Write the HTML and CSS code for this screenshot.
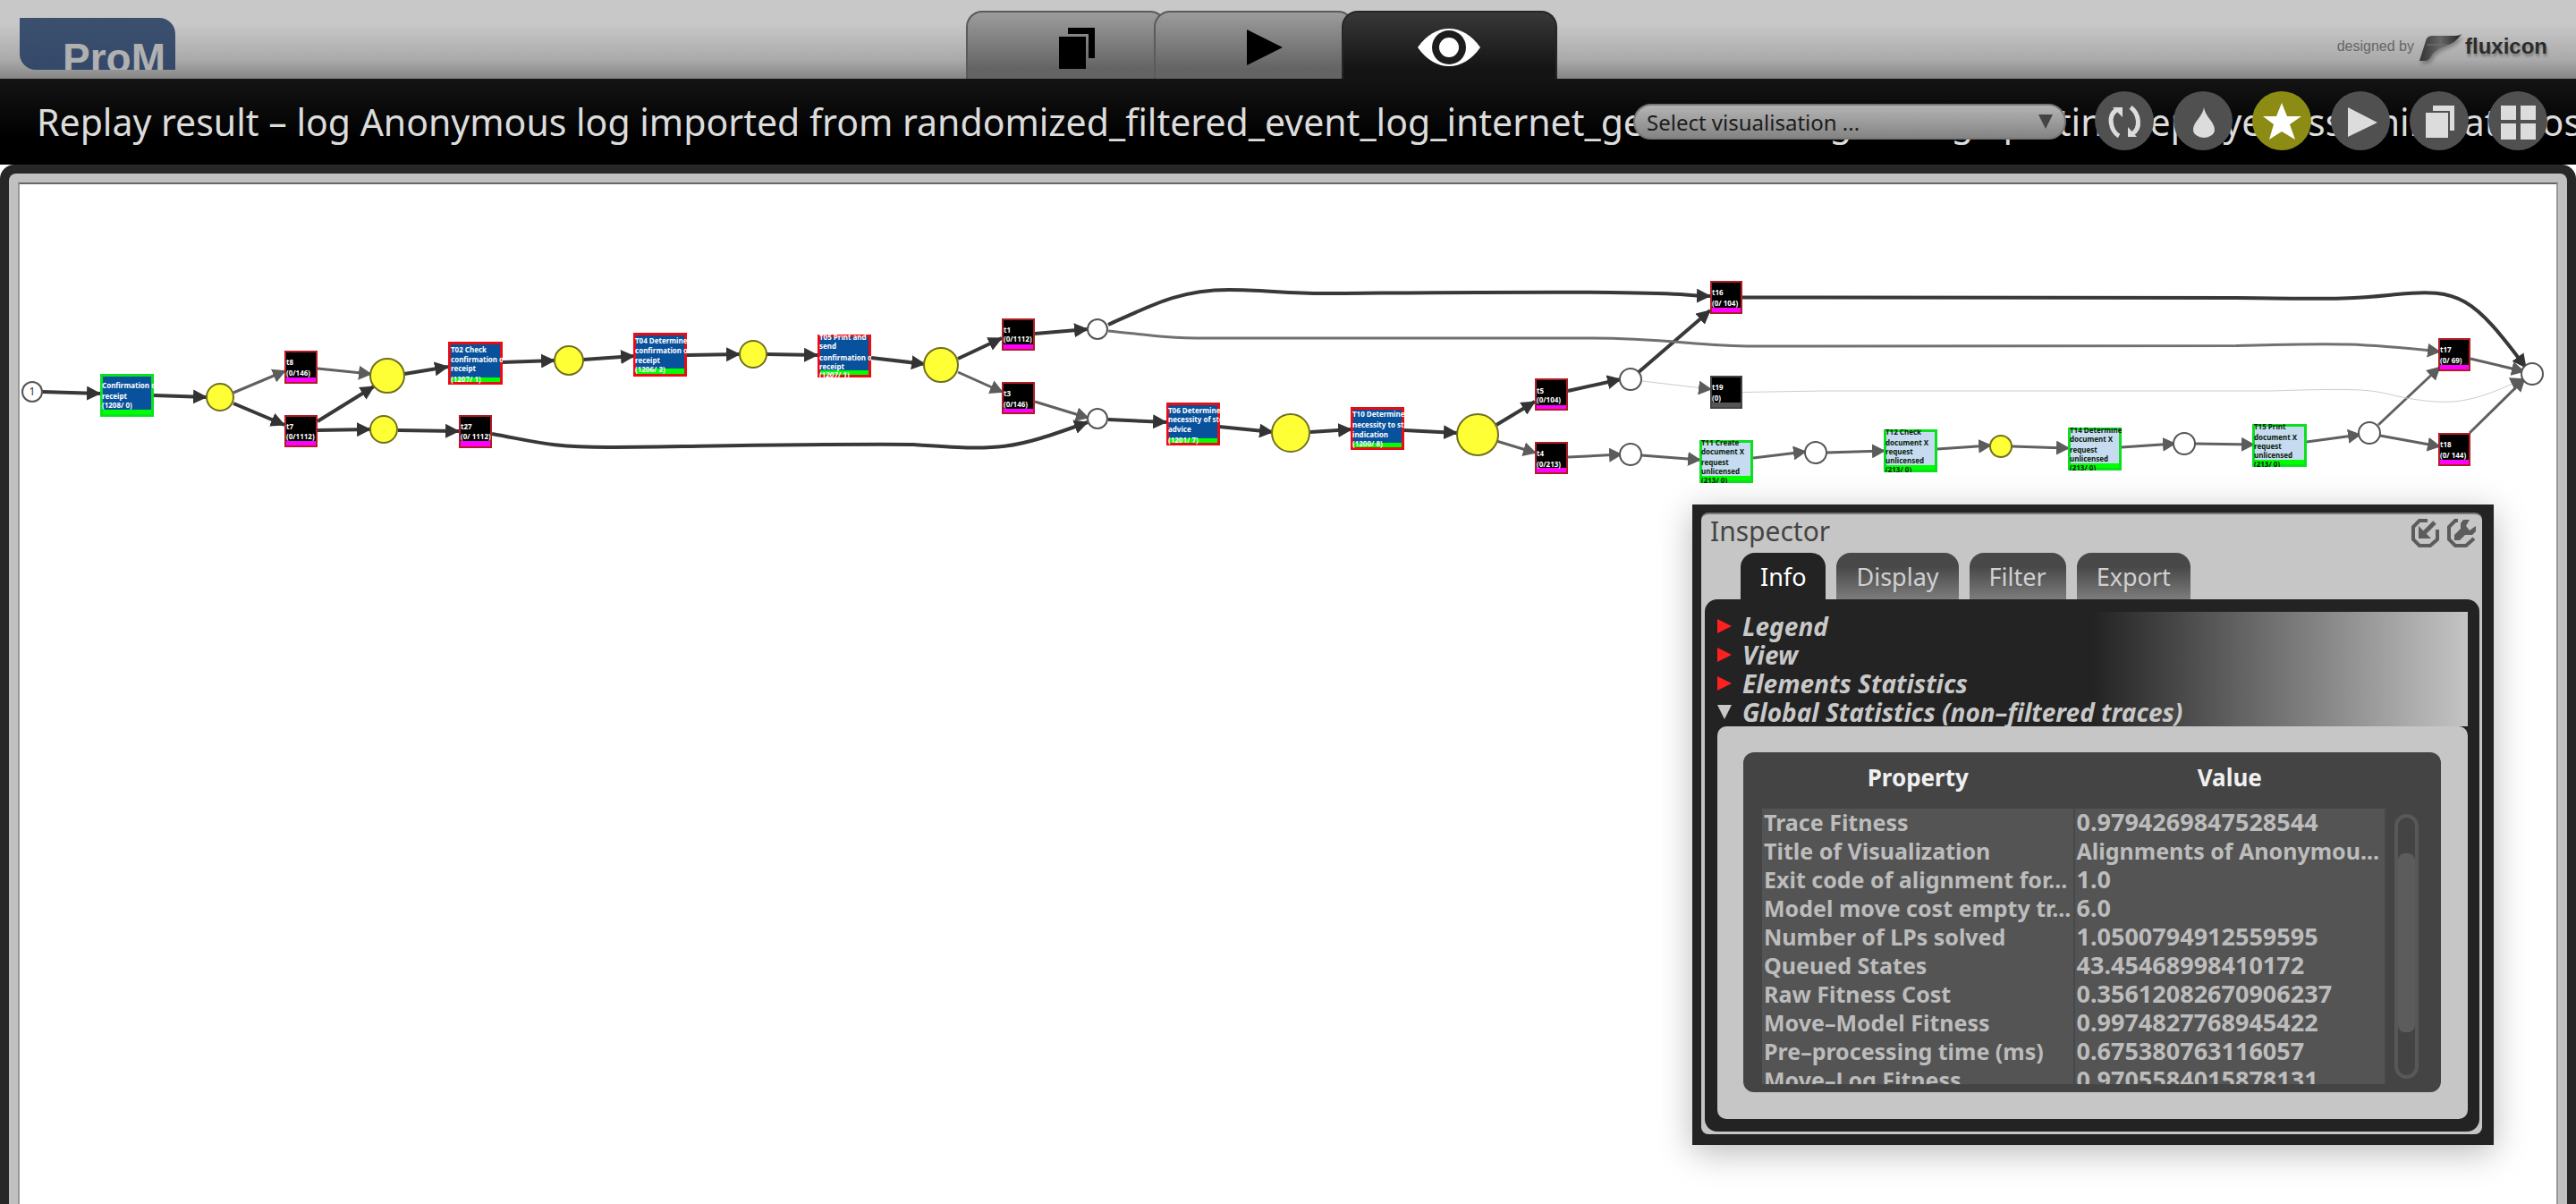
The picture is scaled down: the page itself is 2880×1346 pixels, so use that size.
FILE: index.html
```html
<!DOCTYPE html>
<html lang="en">
<head>
<meta charset="utf-8">
<title>ProM – Replay result</title>
<link rel="stylesheet" href="styles.css">
</head>
<body>
<header class="topbar">
  <div class="brand"><span>ProM</span></div>
  <nav class="main-tabs" aria-label="Views">
    <button class="main-tab" type="button" aria-label="Workspace">
      <svg width="40" height="48" viewBox="0 0 40 48"><path d="M10 2h30v34h-7V9H10z"/><path d="M0 12h30v36H0z"/></svg>
    </button>
    <button class="main-tab" type="button" aria-label="Actions">
      <svg width="40" height="40" viewBox="0 0 40 40"><path d="M0 0l40 20L0 40z"/></svg>
    </button>
    <button class="main-tab active" type="button" aria-label="Visualisation">
      <svg width="70" height="44" viewBox="0 0 70 44"><path fill="#fff" d="M0 22C10 8 22 1 35 1s25 7 35 21C60 36 48 43 35 43S10 36 0 22z"/><circle cx="35" cy="22" r="19" fill="#1c1c1c"/><circle cx="35" cy="22" r="11" fill="#fff"/></svg>
    </button>
  </nav>
  <div class="credit">
    <span class="credit-by">designed by</span>
    <svg width="47" height="32" viewBox="0 0 47 32"><defs><linearGradient id="wing" x1="0" x2="1"><stop offset="0" stop-color="#333"/><stop offset=".5" stop-color="#666"/><stop offset="1" stop-color="#222"/></linearGradient></defs><path fill="url(#wing)" d="M47 0c-5 7-9 10-15 12-8 3-14 6-18 11-2 4-4 7-8 7H0l7-22c1-4 3-6 8-6h22c4 0 7 0 10-2z"/><path d="M8 12h23" stroke="#777" stroke-width="1"/></svg>
    <strong>fluxicon</strong>
  </div>
</header>

<section class="titlebar">
  <h1>Replay result – log Anonymous log imported from randomized_filtered_event_log_internet_general1.xes.gz using Splitting replayer assuming at most 127 tokens in each place.</h1>
  <div class="tools">
    <label class="picker" aria-label="Select visualisation">
      <select><option>Select visualisation ...</option></select>
      <svg width="16" height="16" viewBox="0 0 16 16"><path fill="#444" d="M0 0h16L8 16z"/></svg>
    </label>
    <button class="tool" type="button" aria-label="Refresh"><svg viewBox="0 0 66 66"><g fill="none" stroke="#dcdcdc" stroke-width="5"><path d="M27 50c-9-5-14-24-1-30"/><path d="M40 18c9 6 13 24 1 30"/></g><path fill="#dcdcdc" d="M20 18h11v11zM37 51V40l10 11z"/></svg></button>
    <button class="tool" type="button" aria-label="Filter"><svg viewBox="0 0 66 66"><path fill="#dcdcdc" d="M34 18c1 10 12 16 12 25a12 9 0 0 1-24 0c0-9 11-15 12-25z"/></svg></button>
    <button class="tool starred" type="button" aria-label="Favourite"><svg viewBox="0 0 66 66"><path fill="#fff" d="M33 13l6 15h16L42 37l6 17-15-9-14 9 5-17-12-9h15z"/></svg></button>
    <button class="tool" type="button" aria-label="Run"><svg viewBox="0 0 66 66"><path fill="#dcdcdc" d="M19 18l33 17-33 16z"/></svg></button>
    <button class="tool" type="button" aria-label="Copy"><svg viewBox="0 0 66 66"><path fill="#dcdcdc" d="M26 16h24v28h-5V22H26z"/><path fill="#dcdcdc" d="M18 24h25v28H18z"/></svg></button>
    <button class="tool" type="button" aria-label="Grid"><svg viewBox="0 0 66 66"><path fill="#dcdcdc" d="M14 16h17v16H14zM36 16h17v16H36zM14 36h17v18H14zM36 36h17v18H36z"/></svg></button>
  </div>
</section>

<main class="workspace">
  <div class="mat">
    <div class="canvas">
      <svg class="net" viewBox="22 206 2836 1140" role="img" aria-label="Process model">
        <defs>
          <marker id="dark" markerUnits="userSpaceOnUse" markerWidth="16" markerHeight="16" refX="15" refY="8" orient="auto"><path d="M0 0l16 8-16 8z" fill="#333"/></marker>
          <marker id="grey" markerUnits="userSpaceOnUse" markerWidth="15" markerHeight="16" refX="13" refY="8" orient="auto"><path d="M0 0l15 8-15 8z" fill="#5c5c5c"/></marker>
        </defs>

        <g class="edge strong">
          <path d="M47 438L112 440"/><path d="M172 442L231 444"/><path d="M261 451L318 475"/>
          <path d="M355 471L418 432"/><path d="M355 481L414 480"/><path d="M445 481L513 482"/>
          <path d="M452 418L501 410"/><path d="M562 405L620 403"/><path d="M652 402L709 398"/>
          <path d="M768 397L827 396"/><path d="M857 396L914 397"/><path d="M974 400L1034 407"/>
          <path d="M1071 401L1120 378"/><path d="M1157 373L1216 368"/>
          <path d="M550 485C600 494 615 500 680 500S900 496 1021 497C1120 504 1130 503 1216 472"/>
          <path d="M1239 363C1290 340 1320 324 1374 324C1410 324 1440 328 1480 328S1700 326 1800 327S1870 330 1912 331"/>
          <path d="M1239 469L1304 472"/><path d="M1363 477L1423 483"/><path d="M1465 483L1511 480"/><path d="M1570 481L1629 484"/>
          <path d="M1673 475L1716 449"/><path d="M1753 437L1812 424"/><path d="M1832 416L1912 347"/>
          <path d="M1948 332.500L2500 333C2630 335 2640 333 2680 329C2750 322 2765 332 2824 411"/>
        </g>
        <g class="edge weak">
          <path d="M261 439L318 415"/><path d="M355 412L414 418"/><path d="M1071 416L1120 438"/><path d="M1157 449L1216 467"/>
          <path d="M1673 493L1716 506"/><path d="M1753 511L1812 508"/><path d="M1835 509L1900 514"/><path d="M1960 512L2018 505"/>
          <path d="M2042 506L2106 504"/><path d="M2166 502L2225 498"/><path d="M2249 499L2312 501"/><path d="M2372 500L2431 496"/>
          <path d="M2454 496L2519 497"/><path d="M2579 494L2638 486"/><path d="M2659 475L2727 411"/><path d="M2661 487L2727 499"/>
          <path d="M2762 401L2821 415"/><path d="M2761 484L2822 424"/>
        </g>
        <g class="edge thin">
          <path d="M1239 370C1280 374 1300 378 1350 378H1780C1860 378 1900 387 1960 387L2500 386.500C2620 383 2640 384 2727 393"/>
        </g>
        <g class="edge faint">
          <path d="M1836 426L1912 435"/>
          <path d="M1948 438.500L2040 437H2540C2660 433 2650 437 2690 445C2740 453 2760 452 2820 424"/>
        </g>

        <g class="place">
          <circle cx="36" cy="438" r="11"/><circle cx="1227" cy="368" r="11"/><circle cx="1227" cy="468" r="11"/>
          <circle cx="1823" cy="424" r="12"/><circle cx="1823" cy="508" r="12"/><circle cx="2030" cy="506" r="12"/>
          <circle cx="2442" cy="496" r="12"/><circle cx="2649" cy="484" r="12"/><circle cx="2831" cy="418" r="12"/>
        </g>
        <g class="place marked">
          <circle cx="246" cy="444" r="15"/><circle cx="433" cy="420" r="19"/><circle cx="429" cy="480" r="15"/>
          <circle cx="636" cy="403" r="16"/><circle cx="842" cy="396" r="15"/><circle cx="1052" cy="408" r="19"/>
          <circle cx="1443" cy="484" r="21"/><circle cx="1652" cy="486" r="23"/><circle cx="2237" cy="499" r="12"/>
        </g>
        <text class="token" x="36" y="442">1</text>

        <svg class="node sync" x="112" y="418" width="60" height="48"><rect class="face" width="100%" height="100%"/><rect class="bar" y="40" width="100%" height="8"/><rect class="frame" width="100%" height="100%"/><text><tspan x="2" y="16">Confirmation of</tspan><tspan x="2" y="28">receipt</tspan><tspan x="2" y="38">(1208/ 0)</tspan></text></svg>
        <svg class="node moved" x="501" y="382" width="61" height="48"><rect class="face" width="100%" height="100%"/><rect class="bar" y="40" width="100%" height="8"/><rect class="frame" width="100%" height="100%"/><text><tspan x="3" y="12">T02 Check</tspan><tspan x="3" y="23">confirmation of</tspan><tspan x="3" y="33">receipt</tspan><tspan x="3" y="45">(1207/ 1)</tspan></text></svg>
        <svg class="node moved" x="708" y="372" width="60" height="49"><rect class="face" width="100%" height="100%"/><rect class="bar" y="40" width="100%" height="9"/><rect class="frame" width="100%" height="100%"/><text><tspan x="2" y="12">T04 Determine</tspan><tspan x="2" y="23">confirmation of</tspan><tspan x="2" y="34">receipt</tspan><tspan x="2" y="44">(1206/ 2)</tspan></text></svg>
        <svg class="node moved" x="914" y="374" width="60" height="48"><rect class="face" width="100%" height="100%"/><rect class="bar" y="40" width="100%" height="8"/><rect class="frame" width="100%" height="100%"/><text><tspan x="2" y="6">T05 Print and</tspan><tspan x="2" y="16">send</tspan><tspan x="2" y="29">confirmation of</tspan><tspan x="2" y="39">receipt</tspan><tspan x="2" y="48">(1207/ 1)</tspan></text></svg>
        <svg class="node moved" x="1304" y="450" width="60" height="48"><rect class="face" width="100%" height="100%"/><rect class="bar" y="40" width="100%" height="8"/><rect class="frame" width="100%" height="100%"/><text><tspan x="2" y="12">T06 Determine</tspan><tspan x="2" y="22">necessity of stop</tspan><tspan x="2" y="33">advice</tspan><tspan x="2" y="45">(1201/ 7)</tspan></text></svg>
        <svg class="node moved" x="1510" y="455" width="60" height="48"><rect class="face" width="100%" height="100%"/><rect class="bar" y="40" width="100%" height="8"/><rect class="frame" width="100%" height="100%"/><text><tspan x="2" y="11">T10 Determine</tspan><tspan x="2" y="23">necessity to stop</tspan><tspan x="2" y="34">indication</tspan><tspan x="2" y="44">(1200/ 8)</tspan></text></svg>

        <svg class="node sync pale" x="1900" y="492" width="60" height="48"><rect class="face" width="100%" height="100%"/><rect class="bar" y="40" width="100%" height="8"/><rect class="frame" width="100%" height="100%"/><text><tspan x="2" y="6">T11 Create</tspan><tspan x="2" y="16">document X</tspan><tspan x="2" y="28">request</tspan><tspan x="2" y="38">unlicensed</tspan><tspan x="2" y="48">(213/ 0)</tspan></text></svg>
        <svg class="node sync pale" x="2106" y="480" width="60" height="48"><rect class="face" width="100%" height="100%"/><rect class="bar" y="40" width="100%" height="8"/><rect class="frame" width="100%" height="100%"/><text><tspan x="2" y="6">T12 Check</tspan><tspan x="2" y="18">document X</tspan><tspan x="2" y="28">request</tspan><tspan x="2" y="38">unlicensed</tspan><tspan x="2" y="48">(213/ 0)</tspan></text></svg>
        <svg class="node sync pale" x="2312" y="478" width="60" height="48"><rect class="face" width="100%" height="100%"/><rect class="bar" y="40" width="100%" height="8"/><rect class="frame" width="100%" height="100%"/><text><tspan x="2" y="6">T14 Determine</tspan><tspan x="2" y="16">document X</tspan><tspan x="2" y="28">request</tspan><tspan x="2" y="38">unlicensed</tspan><tspan x="2" y="48">(213/ 0)</tspan></text></svg>
        <svg class="node sync pale" x="2518" y="474" width="61" height="48"><rect class="face" width="100%" height="100%"/><rect class="bar" y="40" width="100%" height="8"/><rect class="frame" width="100%" height="100%"/><text><tspan x="2" y="6">T15 Print</tspan><tspan x="2" y="18">document X</tspan><tspan x="2" y="28">request</tspan><tspan x="2" y="38">unlicensed</tspan><tspan x="2" y="48">(213/ 0)</tspan></text></svg>

        <svg class="node silent" x="318" y="392" width="37" height="37"><rect class="face" width="100%" height="100%"/><rect class="bar" y="30" width="100%" height="7"/><rect class="frame" width="100%" height="100%"/><text><tspan x="2" y="16">t8</tspan><tspan x="2" y="28">(0/146)</tspan></text></svg>
        <svg class="node silent" x="318" y="464" width="37" height="36"><rect class="face" width="100%" height="100%"/><rect class="bar" y="29" width="100%" height="7"/><rect class="frame" width="100%" height="100%"/><text><tspan x="2" y="16">t7</tspan><tspan x="2" y="27">(0/1112)</tspan></text></svg>
        <svg class="node silent" x="513" y="464" width="37" height="37"><rect class="face" width="100%" height="100%"/><rect class="bar" y="29" width="100%" height="8"/><rect class="frame" width="100%" height="100%"/><text><tspan x="2" y="16">t27</tspan><tspan x="2" y="27">(0/ 1112)</tspan></text></svg>
        <svg class="node silent" x="1120" y="356" width="37" height="36"><rect class="face" width="100%" height="100%"/><rect class="bar" y="29" width="100%" height="7"/><rect class="frame" width="100%" height="100%"/><text><tspan x="2" y="16">t1</tspan><tspan x="2" y="26">(0/1112)</tspan></text></svg>
        <svg class="node silent" x="1120" y="427" width="37" height="36"><rect class="face" width="100%" height="100%"/><rect class="bar" y="30" width="100%" height="6"/><rect class="frame" width="100%" height="100%"/><text><tspan x="2" y="16">t3</tspan><tspan x="2" y="28">(0/146)</tspan></text></svg>
        <svg class="node silent" x="1716" y="423" width="37" height="36"><rect class="face" width="100%" height="100%"/><rect class="bar" y="30" width="100%" height="6"/><rect class="frame" width="100%" height="100%"/><text><tspan x="2" y="17">t5</tspan><tspan x="2" y="27">(0/104)</tspan></text></svg>
        <svg class="node silent" x="1716" y="494" width="37" height="36"><rect class="face" width="100%" height="100%"/><rect class="bar" y="29" width="100%" height="7"/><rect class="frame" width="100%" height="100%"/><text><tspan x="2" y="16">t4</tspan><tspan x="2" y="28">(0/213)</tspan></text></svg>
        <svg class="node silent" x="1912" y="314" width="36" height="37"><rect class="face" width="100%" height="100%"/><rect class="bar" y="30" width="100%" height="7"/><rect class="frame" width="100%" height="100%"/><text><tspan x="2" y="16">t16</tspan><tspan x="2" y="28">(0/ 104)</tspan></text></svg>
        <svg class="node silent skipped" x="1912" y="420" width="36" height="37"><rect class="face" width="100%" height="100%"/><rect class="bar" y="30" width="100%" height="7"/><rect class="frame" width="100%" height="100%"/><text><tspan x="2" y="16">t19</tspan><tspan x="2" y="28">(0)</tspan></text></svg>
        <svg class="node silent" x="2726" y="378" width="36" height="37"><rect class="face" width="100%" height="100%"/><rect class="bar" y="30" width="100%" height="7"/><rect class="frame" width="100%" height="100%"/><text><tspan x="2" y="16">t17</tspan><tspan x="2" y="28">(0/ 69)</tspan></text></svg>
        <svg class="node silent" x="2726" y="484" width="36" height="37"><rect class="face" width="100%" height="100%"/><rect class="bar" y="30" width="100%" height="7"/><rect class="frame" width="100%" height="100%"/><text><tspan x="2" y="16">t18</tspan><tspan x="2" y="28">(0/ 144)</tspan></text></svg>
      </svg>

      <aside class="inspector" aria-label="Inspector">
        <div class="inspector-body">
          <div class="inspector-head">
            <h2>Inspector</h2>
            <button type="button" aria-label="Dock"><svg width="32" height="32" viewBox="0 0 32 32"><path d="M18 2H9L2 9v14l7 7h12l8-7V12" fill="none" stroke="#5c5c5c" stroke-width="4"/><path d="M26 4L12 18" stroke="#5c5c5c" stroke-width="5"/><path d="M8 8v14h14l-5-5-4-4z" fill="#5c5c5c"/></svg></button>
            <button type="button" aria-label="Settings"><svg width="32" height="32" viewBox="0 0 32 32"><path d="M12 2H9L2 9v14l7 7h12l9-8" fill="none" stroke="#5c5c5c" stroke-width="4"/><path d="M18 1h7l-4 7 4 5 7-5v6l-4 4h-8l-6 6H8v-6l7-7V5z" fill="#5c5c5c"/></svg></button>
          </div>
          <div class="inspector-tabs" role="tablist">
            <button class="tab active" type="button" role="tab" aria-selected="true">Info</button>
            <button class="tab" type="button" role="tab">Display</button>
            <button class="tab" type="button" role="tab">Filter</button>
            <button class="tab" type="button" role="tab">Export</button>
          </div>
          <div class="pane">
            <div class="sections">
              <button class="section" type="button"><svg width="16" height="16" viewBox="0 0 16 16"><path fill="#ff2020" d="M0 0l16 8-16 8z"/></svg>Legend</button>
              <button class="section" type="button"><svg width="16" height="16" viewBox="0 0 16 16"><path fill="#ff2020" d="M0 0l16 8-16 8z"/></svg>View</button>
              <button class="section" type="button"><svg width="16" height="16" viewBox="0 0 16 16"><path fill="#ff2020" d="M0 0l16 8-16 8z"/></svg>Elements Statistics</button>
              <button class="section" type="button" aria-expanded="true"><svg width="16" height="16" viewBox="0 0 16 16"><path fill="#c8c8c8" d="M0 0h16L8 16z"/></svg>Global Statistics (non–filtered traces)</button>
            </div>
            <div class="stats">
              <div class="stats-box">
                <div class="stats-view">
                  <table>
                    <thead><tr><th scope="col">Property</th><th scope="col">Value</th></tr></thead>
                    <tbody>
                      <tr><td>Trace Fitness</td><td class="num">0.9794269847528544</td></tr>
                      <tr><td>Title of Visualization</td><td>Alignments of Anonymou...</td></tr>
                      <tr><td>Exit code of alignment for...</td><td class="num">1.0</td></tr>
                      <tr><td>Model move cost empty tr...</td><td class="num">6.0</td></tr>
                      <tr><td>Number of LPs solved</td><td class="num">1.0500794912559595</td></tr>
                      <tr><td>Queued States</td><td class="num">43.45468998410172</td></tr>
                      <tr><td>Raw Fitness Cost</td><td class="num">0.35612082670906237</td></tr>
                      <tr><td>Move–Model Fitness</td><td class="num">0.9974827768945422</td></tr>
                      <tr><td>Pre–processing time (ms)</td><td class="num">0.675380763116057</td></tr>
                      <tr><td>Move–Log Fitness</td><td class="num">0.9705584015878131</td></tr>
                    </tbody>
                  </table>
                </div>
                <div class="track"><div class="thumb"></div></div>
              </div>
            </div>
          </div>
        </div>
      </aside>
    </div>
  </div>
</main>
</body>
</html>
```
FILE: styles.css
```css
* { box-sizing: border-box; }

body {
  margin: 0;
  height: 100vh;
  overflow: hidden;
  display: flex;
  flex-direction: column;
  background: #fff;
  font-family: "Noto Sans", "Open Sans", sans-serif;
}

button { border: 0; padding: 0; background: none; font: inherit; }
svg { display: block; flex: none; }

/* top bar */
.topbar {
  flex: none;
  height: 88px;
  display: grid;
  grid-template-columns: 1fr auto 1fr;
  background: linear-gradient(#c8c8c8 30%, #aaa 76%, #858585);
}

.brand {
  width: 174px;
  height: 58px;
  margin: 20px 0 0 22px;
  padding-left: 48px;
  overflow: hidden;
  border-radius: 0 18px 0 18px;
  background: linear-gradient(#3c506e, #34486a);
  color: #b0b0b0;
  font: bold 46px/90px "Liberation Sans", Arial, sans-serif;
}

.main-tabs {
  display: flex;
  margin: 12px 60px 0 0;
}

.main-tab {
  width: 224px;
  margin-right: -14px;
  display: flex;
  justify-content: center;
  align-items: center;
  padding: 0 0 2px 24px;
  border: 2px solid #5a5a5a;
  border-bottom: 0;
  border-radius: 18px 18px 0 0;
  background: linear-gradient(#9c9c9c, #646464 70%);
}

.main-tab svg { margin-bottom: 10px; }

.main-tab.active {
  width: 241px;
  margin-right: 0;
  padding-left: 0;
  border-color: #262626;
  background: linear-gradient(#383838, #141414 70%);
}

.credit {
  justify-self: end;
  display: flex;
  align-items: center;
  padding: 0 32px 0 0;
  height: 104px;
  color: #666;
  font: 16px "Liberation Sans", Arial, sans-serif;
}

.credit svg { margin: 4px 4px 0 6px; filter: drop-shadow(2px 3px 2px rgba(0, 0, 0, .3)); }
.credit strong { color: #2c2c2c; font-size: 24px; text-shadow: 1px 3px 3px rgba(0, 0, 0, .3); }

/* title bar: the tools float over the end of the long title */
.titlebar {
  flex: none;
  height: 96px;
  display: grid;
  grid-template-columns: minmax(0, 1fr);
  align-items: center;
  background: linear-gradient(#141414, #000 70%);
}

.titlebar h1 {
  grid-area: 1 / 1;
  margin: 0;
  padding-left: 41px;
  overflow: hidden;
  white-space: nowrap;
  color: #dcdcdc;
  font-size: 41px;
  font-weight: 400;
  line-height: 60px;
}

.tools {
  grid-area: 1 / 1;
  justify-self: end;
  display: flex;
  align-items: center;
  gap: 22px;
  padding: 0 32px 2px 0;
}

.picker {
  display: grid;
  align-items: center;
  margin: 2px 10px 0 0;
}

.picker select {
  grid-area: 1 / 1;
  appearance: none;
  width: 484px;
  height: 40px;
  padding: 0 40px 0 13px;
  border: 2px solid #777;
  border-radius: 20px;
  background: linear-gradient(#b4b4b4, #848484);
  color: #1c1c1c;
  font: 24px "Noto Sans", "Open Sans", sans-serif;
}

.picker svg { grid-area: 1 / 1; justify-self: end; margin-right: 15px; }

.tool {
  width: 66px;
  height: 66px;
  border-radius: 50%;
  background: #505050;
}

.tool.starred { background: #8c8c14; }

/* workspace frame */
.workspace {
  flex: 1;
  min-height: 0;
  display: flex;
  padding: 10px 10px 0;
  border-radius: 16px 16px 0 0;
  background: #272727;
}

.mat {
  flex: 1;
  display: flex;
  padding: 10px 10px 0;
  border-radius: 8px 8px 0 0;
  background: #c0c0c0;
}

.canvas {
  position: relative;
  flex: 1;
  min-width: 0;
  overflow: hidden;
  border: 2px solid #999;
  border-top-color: #666;
  border-bottom: 0;
  background: #fff;
}

/* process model */
.net { width: 100%; height: auto; }
.edge { fill: none; }
.edge.strong { stroke: #383838; stroke-width: 4; }
.edge.strong path { marker-end: url(#dark); }
.edge.weak { stroke: #606060; stroke-width: 3; }
.edge.thin { stroke: #707070; stroke-width: 3; }
.edge.faint { stroke: #ccc; stroke-width: 1; }
.edge.weak path, .edge.thin path, .edge.faint path { marker-end: url(#grey); }
.place { fill: #fff; stroke: #555; stroke-width: 2; }
.place.marked { fill: #ffff36; stroke: #707020; }
.token { fill: #333; font-size: 12px; text-anchor: middle; }

.node text { fill: #fff; font-size: 8px; font-weight: 700; }
.node .face { fill: #08519c; }
.node .bar { fill: #0f0; }
.node .frame { fill: none; stroke-width: 6; }
.sync .frame { stroke: #0be020; }
.moved .frame { stroke: #e80c14; }
.pale text { fill: #0a200a; }
.pale .face { fill: #c6dbef; }
.silent .face { fill: #000; }
.silent .bar { fill: #f0f; }
.silent .frame { stroke: #b01c24; stroke-width: 4; }
.skipped .bar { fill: #555; }
.skipped .frame { stroke: #444; }

/* inspector window */
.inspector {
  position: absolute;
  top: 358px;
  right: 70px;
  width: 896px;
  padding: 9px 13px 12px 10px;
  background: #232323;
  box-shadow: 0 8px 36px rgba(0, 0, 0, .28);
}

.inspector-body {
  padding: 0 3px 3px 4px;
  border-top: 2px solid #777;
  border-radius: 8px;
  background: #c6c6c6;
}

.inspector-head {
  display: flex;
  height: 43px;
  gap: 8px;
  align-items: flex-start;
  padding: 5px 4px 0 6px;
}

.inspector-head h2 {
  flex: 1;
  margin: 0;
  color: #444;
  font-size: 30px;
  font-weight: 400;
  line-height: 28px;
}

.inspector-tabs { display: flex; gap: 12px; padding-left: 40px; }

.tab {
  height: 52px;
  padding: 0 22px;
  border-radius: 16px 16px 0 0;
  background: linear-gradient(#484848 30%, #7c7c7c);
  color: #d0d0d0;
  font-size: 27px;
}

.tab.active { background: #232323; color: #fff; }

.pane {
  padding: 14px 13px 14px 14px;
  border-radius: 14px;
  background: #232323;
}

.sections {
  display: flex;
  flex-direction: column;
  background: linear-gradient(90deg, #232323 50%, #c4c4c4);
}

.section {
  display: flex;
  align-items: center;
  gap: 12px;
  height: 32px;
  color: #c8c8c8;
  font-size: 28px;
  font-style: italic;
  font-weight: 700;
  line-height: 32px;
}

.stats {
  padding: 29px 30px 30px 29px;
  border-radius: 10px;
  background: #c6c6c6;
}

.stats-box {
  display: flex;
  gap: 9px;
  padding: 0 25px 9px 21px;
  border-radius: 12px;
  background: #444;
}

.stats-view { flex: 1; min-width: 0; height: 371px; overflow: hidden; }

.stats-view table {
  width: 100%;
  table-layout: fixed;
  border-collapse: collapse;
  font-size: 25px;
}

.stats-view th {
  height: 63px;
  padding: 0 0 8px;
  color: #f0f0f0;
  font-size: 26px;
}

.stats-view td {
  height: 32px;
  padding: 0 0 2px 2px;
  overflow: hidden;
  white-space: nowrap;
  border-right: 2px solid #484848;
  background: #545454;
  color: #bcbcbc;
  font-weight: 700;
  line-height: 30px;
}

.stats-view .num { font-size: 27px; }

.track {
  width: 27px;
  height: 296px;
  margin-top: 69px;
  padding-top: 40px;
  border: 4px solid #585858;
  border-radius: 14px;
}

.thumb { height: 200px; border-radius: 8px; background: #5c5c5c; }
```
